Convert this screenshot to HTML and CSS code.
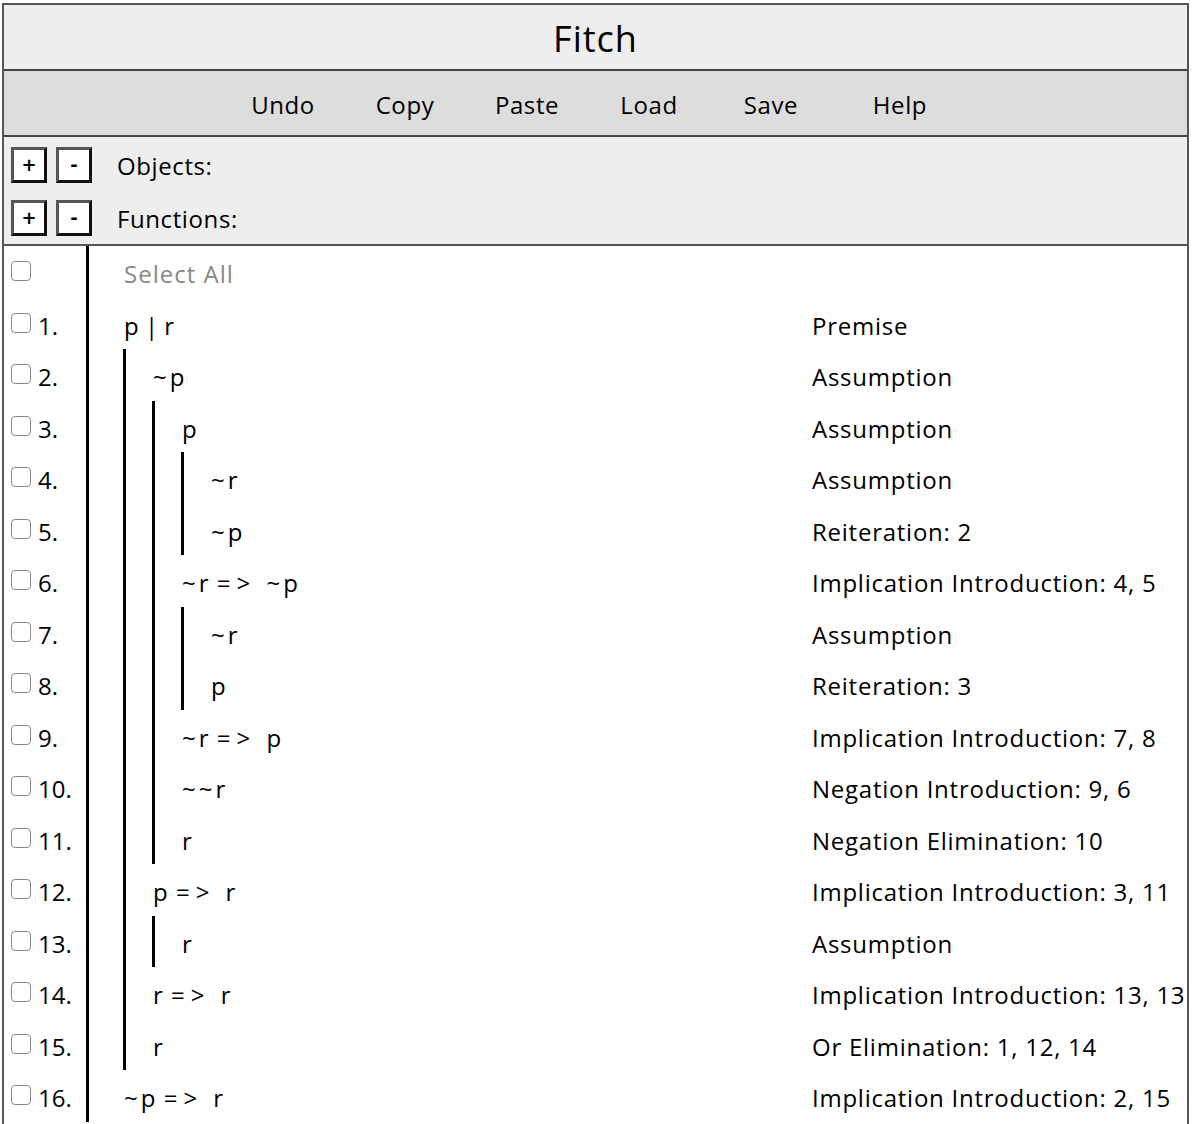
FILE: index.html
```html
<!DOCTYPE html>
<html>
<head>
<meta charset="utf-8">
<title>Fitch</title>
<link rel="stylesheet" href="styles.css">
</head>
<body>
<div class="app">
  <header class="title-bar"><h1 class="title">Fitch</h1></header>
  <nav class="toolbar">
    <button class="tool">Undo</button>
    <button class="tool">Copy</button>
    <button class="tool">Paste</button>
    <button class="tool">Load</button>
    <button class="tool">Save</button>
    <button class="tool tool-help">Help</button>
  </nav>
  <section class="symbols">
    <div class="symbol-row">
      <button class="sq-btn">+</button>
      <button class="sq-btn">-</button>
      <span class="symbol-label">Objects:</span>
    </div>
    <div class="symbol-row">
      <button class="sq-btn">+</button>
      <button class="sq-btn">-</button>
      <span class="symbol-label">Functions:</span>
    </div>
  </section>
  <main class="proof">
    <div class="numbers">
      <div class="num-row"><span class="cb"></span></div>
      <div class="num-row"><span class="cb"></span><span class="num">1.</span></div>
      <div class="num-row"><span class="cb"></span><span class="num">2.</span></div>
      <div class="num-row"><span class="cb"></span><span class="num">3.</span></div>
      <div class="num-row"><span class="cb"></span><span class="num">4.</span></div>
      <div class="num-row"><span class="cb"></span><span class="num">5.</span></div>
      <div class="num-row"><span class="cb"></span><span class="num">6.</span></div>
      <div class="num-row"><span class="cb"></span><span class="num">7.</span></div>
      <div class="num-row"><span class="cb"></span><span class="num">8.</span></div>
      <div class="num-row"><span class="cb"></span><span class="num">9.</span></div>
      <div class="num-row"><span class="cb"></span><span class="num">10.</span></div>
      <div class="num-row"><span class="cb"></span><span class="num">11.</span></div>
      <div class="num-row"><span class="cb"></span><span class="num">12.</span></div>
      <div class="num-row"><span class="cb"></span><span class="num">13.</span></div>
      <div class="num-row"><span class="cb"></span><span class="num">14.</span></div>
      <div class="num-row"><span class="cb"></span><span class="num">15.</span></div>
      <div class="num-row"><span class="cb"></span><span class="num">16.</span></div>
    </div>
    <div class="formulas">
      <div class="f-row select-all">Select All</div>
      <div class="f-row">p | r</div>
      <div class="sub">
        <div class="f-row"><span class="neg">~</span>p</div>
        <div class="sub">
          <div class="f-row">p</div>
          <div class="sub">
            <div class="f-row"><span class="neg">~</span>r</div>
            <div class="f-row"><span class="neg">~</span>p</div>
          </div>
          <div class="f-row"><span class="neg">~</span>r <span class="imp">=&gt;</span> <span class="neg">~</span>p</div>
          <div class="sub">
            <div class="f-row"><span class="neg">~</span>r</div>
            <div class="f-row">p</div>
          </div>
          <div class="f-row"><span class="neg">~</span>r <span class="imp">=&gt;</span> p</div>
          <div class="f-row"><span class="neg">~</span><span class="neg">~</span>r</div>
          <div class="f-row">r</div>
        </div>
        <div class="f-row">p <span class="imp">=&gt;</span> r</div>
        <div class="sub">
          <div class="f-row">r</div>
        </div>
        <div class="f-row">r <span class="imp">=&gt;</span> r</div>
        <div class="f-row">r</div>
      </div>
      <div class="f-row"><span class="neg">~</span>p <span class="imp">=&gt;</span> r</div>
    </div>
    <div class="reasons">
      <div class="r-row"></div>
      <div class="r-row">Premise</div>
      <div class="r-row">Assumption</div>
      <div class="r-row">Assumption</div>
      <div class="r-row">Assumption</div>
      <div class="r-row">Reiteration: 2</div>
      <div class="r-row">Implication Introduction: 4, 5</div>
      <div class="r-row">Assumption</div>
      <div class="r-row">Reiteration: 3</div>
      <div class="r-row">Implication Introduction: 7, 8</div>
      <div class="r-row">Negation Introduction: 9, 6</div>
      <div class="r-row">Negation Elimination: 10</div>
      <div class="r-row">Implication Introduction: 3, 11</div>
      <div class="r-row">Assumption</div>
      <div class="r-row">Implication Introduction: 13, 13</div>
      <div class="r-row">Or Elimination: 1, 12, 14</div>
      <div class="r-row">Implication Introduction: 2, 15</div>
    </div>
  </main>
</div>
</body>
</html>
```

FILE: styles.css
```css
html, body {
  margin: 0;
  padding: 0;
  background: #fff;
}
body {
  font-family: "Open Sans", "Noto Sans", sans-serif;
  color: #000;
}
.app {
  margin: 3px 3px 0 2px;
  border: 2px solid #555;
  border-bottom: none;
  min-height: 1125px;
  box-sizing: border-box;
  overflow: hidden;
}
.title-bar {
  background: #eee;
  height: 66px;
  border-bottom: 2px solid #444;
  display: flex;
  align-items: center;
  justify-content: center;
  box-sizing: border-box;
  padding-top: 4px;
}
.title {
  margin: 0;
  font-weight: 400;
  font-size: 36px;
  line-height: 1;
  letter-spacing: 1px;
}
.toolbar {
  background: #ddd;
  height: 66px;
  border-bottom: 2px solid #444;
  display: flex;
  align-items: center;
  padding-left: 218px;
  box-sizing: border-box;
  padding-top: 2px;
}
.tool {
  width: 122px;
  background: none;
  border: none;
  padding: 0;
  font-family: inherit;
  font-size: 24px;
  letter-spacing: 0.6px;
  color: #000;
  text-align: center;
}
.tool-help {
  margin-left: 7px;
}
.symbols {
  background: #eee;
  height: 109px;
  border-bottom: 2px solid #555;
  box-sizing: border-box;
  padding: 10px 0 0 7px;
  display: flex;
  flex-direction: column;
  gap: 17px;
}
.symbol-row {
  display: flex;
  align-items: center;
  height: 36px;
}
.sq-btn {
  width: 36px;
  height: 36px;
  box-sizing: border-box;
  margin-right: 9px;
  background: #fff;
  border: 3px solid;
  border-color: #555 #111 #111 #555;
  font-family: "DejaVu Sans", sans-serif;
  font-weight: 700;
  font-size: 18px;
  line-height: 1;
  padding: 0;
  color: #000;
}
.symbol-label {
  margin-left: 16px;
  font-size: 24px;
  letter-spacing: 0.6px;
}
.proof {
  display: flex;
  font-size: 24px;
  padding-bottom: 10px;
}
.numbers {
  width: 82px;
  flex: none;
  border-right: 3px solid #000;
}
.num-row {
  height: 51.5px;
  display: flex;
  align-items: center;
  padding-left: 7px;
}
.cb {
  width: 20px;
  height: 20px;
  box-sizing: border-box;
  border: 1.5px solid #8a8a8a;
  border-radius: 4px;
  background: #fff;
  margin-top: -1px;
  flex: none;
}
.num {
  margin-left: 7px;
  line-height: 51.5px;
  padding-top: 4px;
}
.formulas {
  width: 723px;
  flex: none;
  padding-left: 35px;
  box-sizing: border-box;
}
.f-row {
  height: 51.5px;
  line-height: 51.5px;
  box-sizing: border-box;
  padding-top: 2px;
  white-space: pre;
}
.select-all {
  color: #888;
  letter-spacing: 1px;
}
.neg {
  letter-spacing: 3px;
}
.imp {
  letter-spacing: 6px;
  margin: 0 4px 0 2px;
}
.sub {
  border-left: 3px solid #000;
  margin-left: -1px;
  padding-left: 27px;
}
.reasons {
  flex: 1;
  min-width: 0;
  overflow: hidden;
}
.r-row {
  height: 51.5px;
  line-height: 51.5px;
  box-sizing: border-box;
  padding-top: 2px;
  white-space: nowrap;
  letter-spacing: 0.75px;
}
```
